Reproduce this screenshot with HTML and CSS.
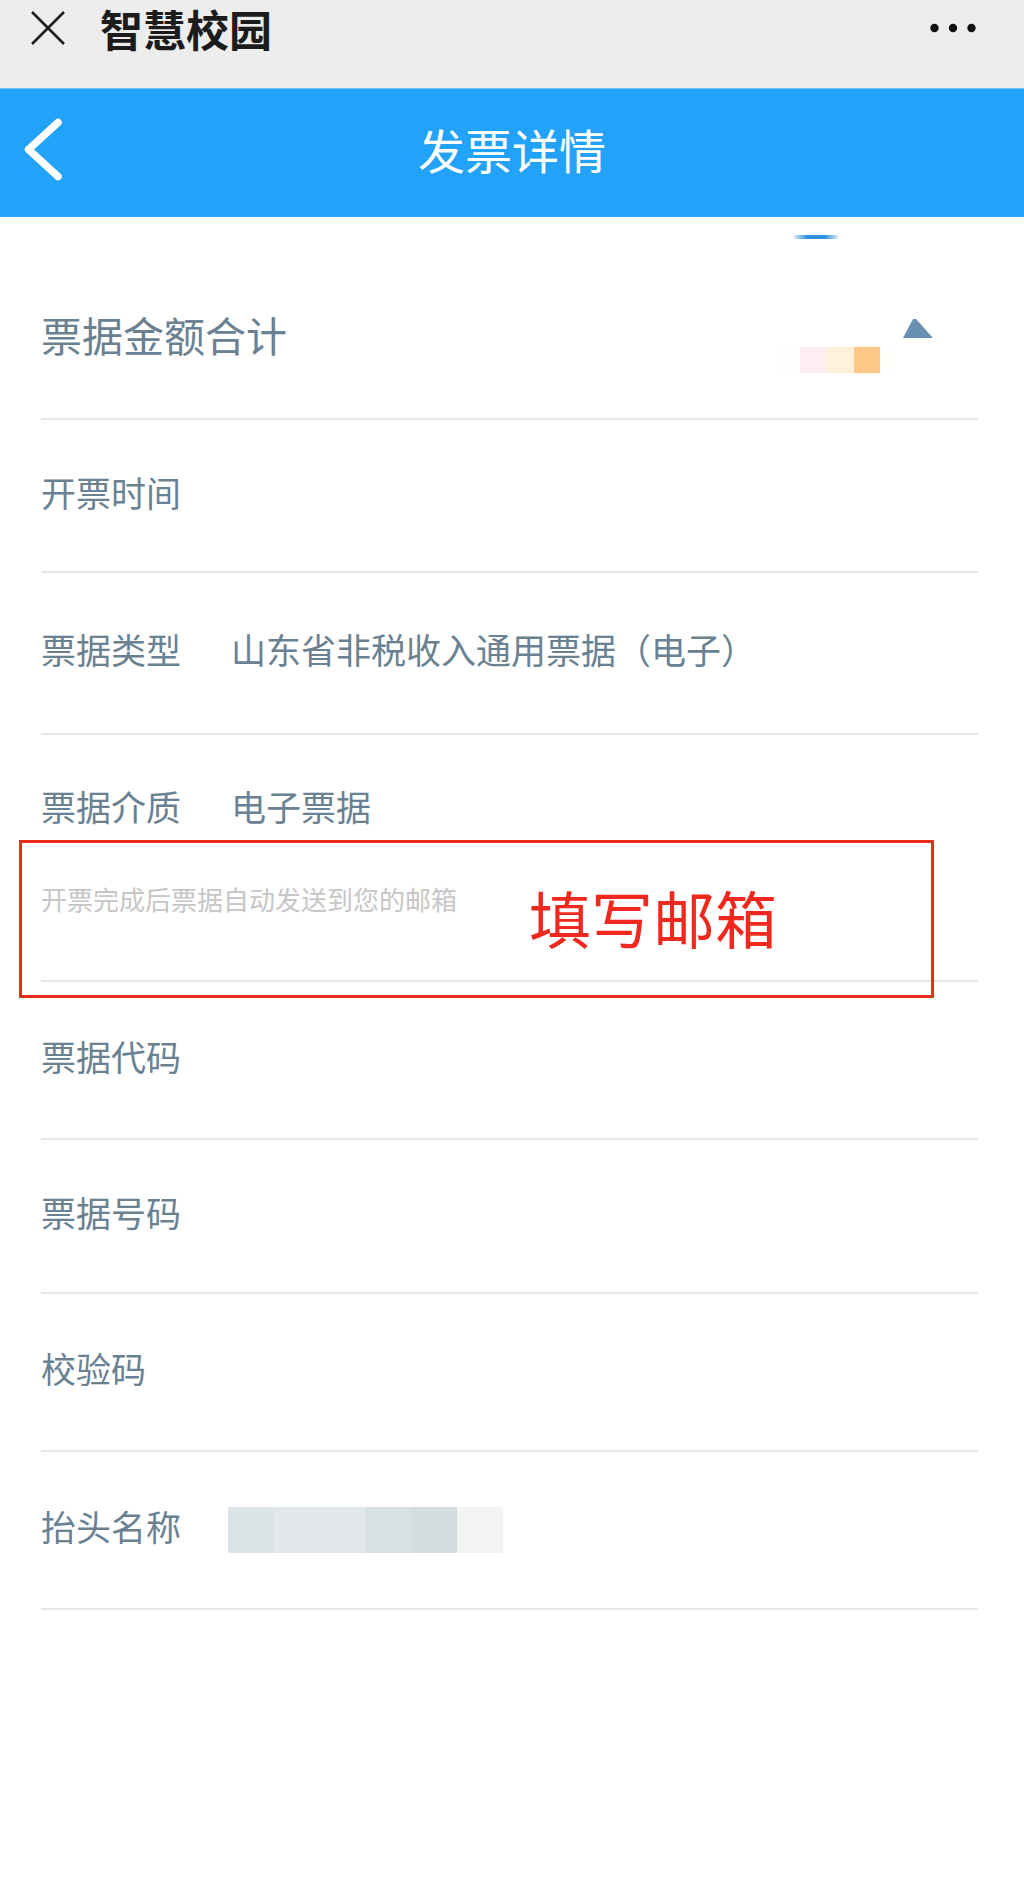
FILE: index.html
```html
<!DOCTYPE html>
<html lang="zh-CN">
<head>
<meta charset="utf-8">
<title>发票详情</title>
<link rel="stylesheet" href="styles.css">
</head>
<body>
<div class="page">
  <div class="wx-bar">
    <svg class="wx-close" width="36" height="36" viewBox="0 0 36 36"><path d="M2 2 L34 34 M34 2 L2 34" stroke="#1f1f1f" stroke-width="2.6" fill="none"/></svg>
    <div class="wx-title">智慧校园</div>
    <svg class="wx-more" width="46" height="10" viewBox="0 0 46 10"><circle cx="4.5" cy="5" r="4.2" fill="#111"/><circle cx="23" cy="5" r="4.2" fill="#111"/><circle cx="41.5" cy="5" r="4.2" fill="#111"/></svg>
  </div>
  <header class="app-header">
    <svg class="back" width="50" height="80" viewBox="0 0 50 80"><path d="M38 9.5 L8.5 36.5 L38 63.5" stroke="#fff" stroke-width="7.5" stroke-linecap="round" stroke-linejoin="round" fill="none"/></svg>
    <h1 class="app-title">发票详情</h1>
    <span class="spacer"></span>
  </header>
  <main class="content">
    <div class="row row-total">
      <span class="scroll-mark"></span>
      <span class="label label-big">票据金额合计</span>
      <div class="amount">
        <div class="amount-blur"></div>
        <svg class="toggle" width="30" height="19" viewBox="0 0 30 19"><polygon points="0,19 10,0 13,0 30,19" fill="#6890b2"/></svg>
      </div>
    </div>
    <div class="row row-a">
      <span class="label">开票时间</span>
    </div>
    <div class="row row-b">
      <span class="label">票据类型</span>
      <span class="value">山东省非税收入通用票据（电子）</span>
    </div>
    <div class="row row-media">
      <div class="media-line">
        <span class="label">票据介质</span>
        <span class="value">电子票据</span>
      </div>
      <input class="email" type="text" placeholder="开票完成后票据自动发送到您的邮箱">
      <div class="note-box">
        <span class="note-text">填写邮箱</span>
      </div>
    </div>
    <div class="row row-c">
      <span class="label">票据代码</span>
    </div>
    <div class="row row-d">
      <span class="label">票据号码</span>
    </div>
    <div class="row row-c">
      <span class="label">校验码</span>
    </div>
    <div class="row row-c">
      <span class="label">抬头名称</span>
      <div class="name-blur"></div>
    </div>
  </main>
</div>
</body>
</html>
```

FILE: styles.css
```css
* {
  box-sizing: border-box;
}

html, body {
  margin: 0;
  padding: 0;
  background: #ffffff;
}

body {
  font-family: "Noto Sans CJK SC", "Noto Sans", sans-serif;
}

.page {
  width: 1024px;
  min-height: 1903px;
  background: #ffffff;
}

/* WeChat top bar */
.wx-bar {
  height: 88px;
  background: #ededed;
  display: flex;
  align-items: center;
  padding: 0 48px 32px 30px;
}

.wx-close {
  flex: none;
  display: block;
}

.wx-title {
  margin-left: 34px;
  font-size: 43px;
  line-height: 48px;
  font-weight: 700;
  color: #1c1c1c;
}

.wx-more {
  margin-left: auto;
  display: block;
}

/* App header */
.app-header {
  height: 129px;
  background: #22a3f9;
  border-top: 1px solid #74c5f8;
  display: grid;
  grid-template-columns: 1fr auto 1fr;
  align-items: center;
  padding-left: 20px;
  padding-bottom: 8px;
}

.back {
  display: block;
  justify-self: start;
  margin-bottom: -8px;
}

.app-title {
  margin: 0;
  font-size: 47px;
  line-height: 60px;
  font-weight: 400;
  color: #ffffff;
  transform: translateX(-10px);
}

/* Content */
.content {
  padding: 0 46px 0 41px;
}

.row {
  position: relative;
  display: flex;
  align-items: center;
  border-bottom: 2px solid #e6e7e8;
  padding-bottom: 8px;
}

.label {
  flex: none;
  width: 140px;
  font-size: 35px;
  line-height: 44px;
  color: #6a8192;
  white-space: nowrap;
}

.value {
  margin-left: 50px;
  font-size: 35px;
  line-height: 44px;
  color: #6a8192;
  white-space: nowrap;
}

.row-total {
  height: 203px;
  padding-top: 40px;
}

.label-big {
  width: auto;
  font-size: 41px;
  line-height: 50px;
}

.scroll-mark {
  position: absolute;
  top: 18px;
  left: 752px;
  width: 46px;
  height: 4px;
  border-radius: 2px;
  background: linear-gradient(to right, rgba(46, 143, 227, 0.1), #2e8fe3 30%, #2e8fe3 70%, rgba(46, 143, 227, 0.1));
}

.amount {
  margin-left: auto;
  margin-right: 45px;
  align-self: flex-start;
  margin-top: 62px;
  display: flex;
  align-items: flex-start;
  gap: 6px;
}

.amount-blur {
  width: 120px;
  height: 26px;
  margin-top: 28px;
  background: linear-gradient(to right,
    #fefefe 0 23px,
    #fdeef2 23px 49px,
    #fff1dc 49px 77px,
    #fec987 77px 103px,
    #fffefb 103px 120px);
}

.toggle {
  display: block;
}

.row-a {
  height: 153px;
}

.row-b {
  height: 162px;
}

.row-c {
  height: 158px;
}

.row-d {
  height: 154px;
}

/* Medium + email */
.row-media {
  height: 247px;
  flex-direction: column;
  align-items: stretch;
  padding-top: 51px;
  padding-bottom: 0;
}

.media-line {
  display: flex;
  align-items: center;
  height: 40px;
}

.email {
  display: block;
  margin-top: 55px;
  width: 100%;
  height: 36px;
  padding: 0;
  border: none;
  outline: none;
  background: transparent;
  font-family: "Noto Sans CJK SC", "Noto Sans", sans-serif;
  font-size: 26px;
  line-height: 36px;
  color: #555555;
}

.email::placeholder {
  color: #c6c6c6;
}

.note-box {
  position: absolute;
  top: 105px;
  left: -22px;
  width: 915px;
  height: 158px;
  border: 3px solid #ee2a1f;
  padding: 43px 0 0 507px;
}

.note-text {
  display: block;
  font-size: 62px;
  line-height: 62px;
  color: #f0281e;
  white-space: nowrap;
}

.name-blur {
  margin-left: 47px;
  margin-top: 8px;
  width: 275px;
  height: 46px;
  background: linear-gradient(to right,
    #dde4e7 0 45px,
    #e2e8eb 45px 137px,
    #d8e0e3 137px 184px,
    #d4dce0 184px 229px,
    #f1f3f4 229px 275px);
}
```
